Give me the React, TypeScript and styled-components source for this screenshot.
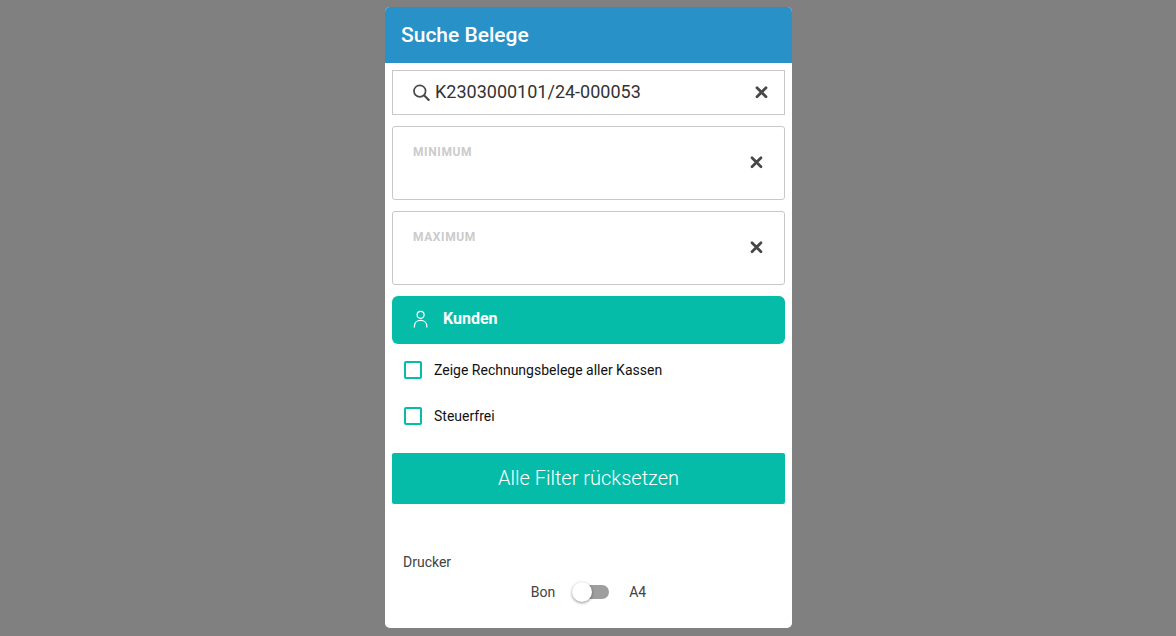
import React, { useState } from "react";
import styled, { createGlobalStyle } from "styled-components";

const GlobalStyle = createGlobalStyle`
  *, *::before, *::after { box-sizing: border-box; }
  body {
    margin: 0;
    background: #808080;
    font-family: Roboto, "Liberation Sans", sans-serif;
    font-size: 14px;
    line-height: 20px;
    color: #424242;
  }
  button, input { font: inherit; }
`;

const Backdrop = styled.div`
  display: flex;
  justify-content: center;
  align-items: flex-start;
  min-height: 100vh;
  padding: 7px 8px 8px 9px;
`;

const Dialog = styled.section`
  width: 100%;
  max-width: 407px;
  border-radius: 5px;
  overflow: hidden;
  background: #fff;
`;

const Header = styled.header`
  display: flex;
  align-items: center;
  height: 56px;
  padding: 0 16px;
  background: #2791c8;
`;

const Title = styled.h1`
  margin: 0;
  font-size: 21px;
  line-height: 28px;
  font-weight: 500;
  color: #fff;
`;

const Form = styled.form`
  padding: 7px 7px 26px;
`;

const Fields = styled.div`
  display: flex;
  flex-direction: column;
  gap: 11px;
`;

const SearchBox = styled.div`
  display: flex;
  align-items: center;
  gap: 5px;
  height: 45px;
  padding: 0 14px 1px 20px;
  border: 1px solid #c8c8c8;
`;

const SearchInput = styled.input`
  flex: 1;
  min-width: 0;
  padding: 0;
  border: 0;
  outline: 0;
  background: transparent;
  font-size: 18px;
  line-height: 24px;
  color: #333;
`;

const NumberBox = styled.div`
  display: flex;
  align-items: center;
  height: 74px;
  padding: 0 19px 2px 20px;
  border: 1px solid #c8c8c8;
  border-radius: 3px;
`;

const NumberField = styled.div`
  display: flex;
  flex: 1;
  flex-direction: column;
  min-width: 0;
`;

const NumberLabel = styled.label`
  font-size: 12px;
  line-height: 16px;
  font-weight: 700;
  letter-spacing: 0.6px;
  text-transform: uppercase;
  color: #cbcbcb;
`;

const NumberInput = styled.input`
  width: 100%;
  height: 21px;
  padding: 0;
  border: 0;
  outline: 0;
  background: transparent;
  font-size: 18px;
`;

const ClearButton = styled.button`
  display: flex;
  align-items: center;
  justify-content: center;
  width: 18px;
  height: 18px;
  padding: 0;
  border: 0;
  background: transparent;
  color: #424242;
  cursor: pointer;
`;

const CustomerButton = styled.button`
  display: flex;
  align-items: center;
  gap: 14px;
  width: 100%;
  height: 48px;
  padding: 0 21px 3px;
  border: 0;
  border-radius: 6px;
  background: #05bca9;
  font-size: 16px;
  font-weight: 700;
  color: #fff;
  cursor: pointer;
`;

const Options = styled.div`
  padding: 3px 12px 14px;
`;

const Option = styled.label`
  display: flex;
  align-items: center;
  gap: 12px;
  height: 46px;
  color: #111;
  cursor: pointer;
`;

const Checkbox = styled.input`
  appearance: none;
  width: 18px;
  height: 18px;
  margin: 0;
  border: 2px solid #05bca9;
  border-radius: 2px;
  background: #fff;
  cursor: pointer;
  &:checked { background: #05bca9; box-shadow: inset 0 0 0 2px #fff; }
`;

const ResetButton = styled.button`
  width: 100%;
  height: 51px;
  padding: 0 0 1px;
  border: 0;
  border-radius: 2px;
  background: #05bca9;
  font-size: 20px;
  font-weight: 300;
  color: #fff;
  cursor: pointer;
`;

const Printer = styled.fieldset`
  margin: 48px 0 0;
  padding: 0 11px;
  border: 0;
`;

const PrinterTitle = styled.legend`
  padding: 0 0 10px;
`;

const SwitchRow = styled.label`
  display: flex;
  align-items: center;
  justify-content: center;
  height: 20px;
  cursor: pointer;
`;

const Switch = styled.input`
  appearance: none;
  display: flex;
  align-items: center;
  width: 34px;
  height: 14px;
  margin: 0 20px;
  border-radius: 7px;
  background: #9e9e9e;
  cursor: pointer;
  &::before {
    content: "";
    width: 20px;
    height: 20px;
    flex: none;
    margin-left: -3px;
    border-radius: 50%;
    background: #fff;
    box-shadow: 0 1px 3px rgba(0, 0, 0, 0.45);
  }
  &:checked::before { margin-left: 17px; }
`;

const CloseIcon = () => (
  <svg width="14" height="14" viewBox="0 0 14 14" fill="none" stroke="#484848" strokeWidth="2.8" strokeLinecap="round" aria-hidden="true">
    <path d="M3 2.8l9 9M12 2.8l-9 9" />
  </svg>
);

const SearchIcon = () => (
  <svg width="17" height="17" viewBox="0 0 17 17" fill="none" stroke="#484848" aria-hidden="true">
    <circle cx="6.8" cy="7.1" r="5.8" strokeWidth="1.7" />
    <path d="M11 11.3l5.3 5.3" strokeWidth="2.1" />
  </svg>
);

const PersonIcon = () => (
  <svg width="16" height="18" viewBox="0 0 16 18" fill="none" stroke="currentColor" strokeWidth="1.2" aria-hidden="true">
    <circle cx="7.6" cy="4.8" r="3.5" />
    <path d="M1.4 17.4v-1.1c0-3.6 2.7-6 6.2-6s6.2 2.4 6.2 6v1.1" />
  </svg>
);

type AmountProps = { id: string; label: string };

function Amount({ id, label }: AmountProps) {
  const [value, setValue] = useState("");
  return (
    <NumberBox>
      <NumberField>
        <NumberLabel htmlFor={id}>{label}</NumberLabel>
        <NumberInput id={id} inputMode="decimal" value={value} onChange={(e) => setValue(e.target.value)} />
      </NumberField>
      <ClearButton type="button" aria-label={`${label} löschen`} onClick={() => setValue("")}>
        <CloseIcon />
      </ClearButton>
    </NumberBox>
  );
}

export default function App() {
  const [query, setQuery] = useState("K2303000101/24-000053");
  return (
    <>
      <GlobalStyle />
      <Backdrop>
        <Dialog role="dialog" aria-labelledby="dialog-title">
          <Header>
            <Title id="dialog-title">Suche Belege</Title>
          </Header>
          <Form onSubmit={(e) => e.preventDefault()}>
            <Fields>
              <SearchBox>
                <SearchIcon />
                <SearchInput aria-label="Suche" value={query} onChange={(e) => setQuery(e.target.value)} />
                <ClearButton type="button" aria-label="Suche löschen" onClick={() => setQuery("")}>
                  <CloseIcon />
                </ClearButton>
              </SearchBox>
              <Amount id="minimum" label="Minimum" />
              <Amount id="maximum" label="Maximum" />
              <CustomerButton type="button">
                <PersonIcon />
                Kunden
              </CustomerButton>
            </Fields>
            <Options>
              <Option>
                <Checkbox type="checkbox" />
                Zeige Rechnungsbelege aller Kassen
              </Option>
              <Option>
                <Checkbox type="checkbox" />
                Steuerfrei
              </Option>
            </Options>
            <ResetButton type="reset">Alle Filter rücksetzen</ResetButton>
            <Printer>
              <PrinterTitle>Drucker</PrinterTitle>
              <SwitchRow>
                Bon
                <Switch type="checkbox" role="switch" />
                A4
              </SwitchRow>
            </Printer>
          </Form>
        </Dialog>
      </Backdrop>
    </>
  );
}
